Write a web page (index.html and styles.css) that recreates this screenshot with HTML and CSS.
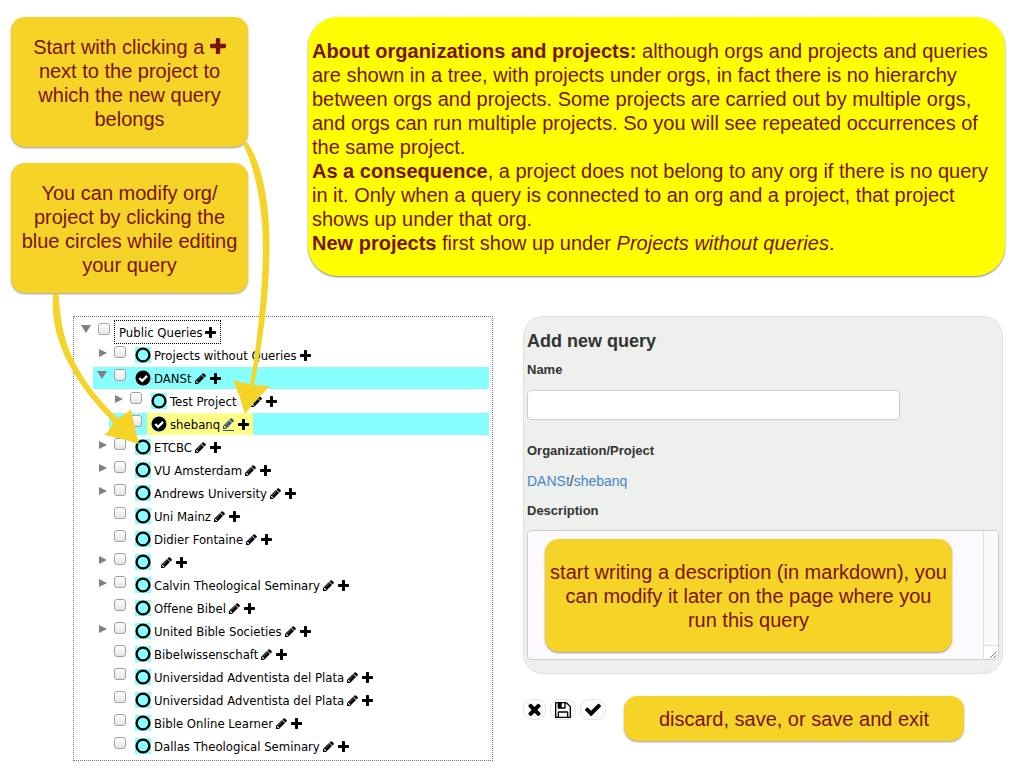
FILE: index.html
```
<!DOCTYPE html>
<html lang="en">
<head>
<meta charset="utf-8">
<title>Add new query</title>
<link rel="stylesheet" href="styles.css">
</head>
<body>
<svg class="symbols" aria-hidden="true">
  <symbol id="plus" viewBox="192 128 1408 1408"><path d="M1600 736v192q0 40-28 68t-68 28h-416v416q0 40-28 68t-68 28h-192q-40 0-68-28t-28-68v-416h-416q-40 0-68-28t-28-68v-192q0-40 28-68t68-28h416v-416q0-40 28-68t68-28h192q40 0 68 28t28 68v416h416q40 0 68 28t28 68z"/></symbol>
  <symbol id="pencil" viewBox="128 128 1536 1536"><path d="M491 1536l91-91-235-235-91 91v107h128v128h107zm523-928q0-22-22-22-10 0-17 7l-542 542q-7 7-7 17 0 22 22 22 10 0 17-7l542-542q7-7 7-17zm-54-192l416 416-832 832h-416v-416zm683 96q0 53-37 90l-166 166-416-416 166-165q36-38 90-38 53 0 91 38l235 234q37 39 37 91z"/></symbol>
  <symbol id="ring" viewBox="0 0 16 16"><circle cx="8" cy="8" r="6.4" fill="none" stroke="#000" stroke-width="2.4"/></symbol>
  <symbol id="ring-check" viewBox="0 0 16 16"><circle cx="8" cy="8" r="7.5"/><path d="M4.2 8l2.9 2.9 5-5" fill="none" stroke="#fff" stroke-width="2.2"/></symbol>
  <symbol id="times" viewBox="302 302 1188 1252"><path d="M1490 1322q0 40-28 68l-136 136q-28 28-68 28t-68-28l-294-294-294 294q-28 28-68 28t-68-28l-136-136q-28-28-28-68t28-68l294-294-294-294q-28-28-28-68t28-68l136-136q28-28 68-28t68 28l294 294 294-294q28-28 68-28t68 28l136 136q28 28 28 68t-28 68l-294 294 294 294q28 28 28 68z"/></symbol>
  <symbol id="floppy" viewBox="128 128 1536 1536"><path d="M512 1536h768v-384h-768v384zm896 0h128v-896q0-14-10-38.5t-20-34.5l-281-281q-10-10-34-20t-39-10v416q0 40-28 68t-68 28h-576q-40 0-68-28t-28-68v-416h-128v1280h128v-416q0-40 28-68t68-28h832q40 0 68 28t28 68v416zm-384-928v-320q0-13-9.5-22.5t-22.5-9.5h-192q-13 0-22.5 9.5t-9.5 22.5v320q0 13 9.5 22.5t22.5 9.5h192q13 0 22.5-9.5t9.5-22.5zm640 32v928q0 40-28 68t-68 28h-1344q-40 0-68-28t-28-68v-1344q0-40 28-68t68-28h928q40 0 88 20t76 48l280 280q28 28 48 76t20 88z"/></symbol>
  <symbol id="check" viewBox="121 270 1550 1252"><path d="M1671 566q0 40-28 68l-724 724-136 136q-28 28-68 28t-68-28l-136-136-362-362q-28-28-28-68t28-68l136-136q28-28 68-28t68 28l294 295 656-657q28-28 68-28t68 28l136 136q28 28 28 68z"/></symbol>
</svg>

<main class="page">
  <section class="intro">
    <div class="hints">
      <p class="note hint">Start with clicking a <svg class="note-plus" aria-label="plus"><use href="#plus"/></svg><br>next to the project to which the new query belongs</p>
      <p class="note hint">You can modify org/<br>project by clicking the blue circles while editing your query</p>
    </div>
    <div class="about">
      <p><b>About organizations and projects:</b> although orgs and projects and queries are shown in a tree, with projects under orgs, in fact there is no hierarchy between orgs and projects. Some projects are carried out by multiple orgs, and orgs can run multiple projects. So you will see repeated occurrences of the same project.</p>
      <p><b>As a consequence</b>, a project does not belong to any org if there is no query in it. Only when a query is connected to an org and a project, that project shows up under that org.</p>
      <p><b>New projects</b> first show up under <i>Projects without queries</i>.</p>
    </div>
  </section>

  <section class="work">
    <ul class="tree" id="tree"></ul>

    <form class="editor">
      <div class="panel">
        <h1 class="heading">Add new query</h1>
        <label class="label" for="name">Name</label>
        <input class="text" id="name" type="text">
        <div class="label">Organization/Project</div>
        <div class="path"><a href="#org">DANSt</a>/<a href="#project">shebanq</a></div>
        <label class="label" for="description">Description</label>
        <div class="area">
          <textarea class="description" id="description"></textarea>
          <div class="track"><svg class="grip" viewBox="0 0 14 14" aria-hidden="true"><path d="M6 13l7-7M10 13l3-3"/></svg></div>
          <p class="note area-note">start writing a description (in markdown), you can modify it later on the page where you<br>run this query</p>
        </div>
      </div>
      <div class="actions">
        <div class="buttons">
          <button class="tool" type="button" aria-label="Discard"><svg class="i-times"><use href="#times"/></svg></button>
          <button class="tool" type="button" aria-label="Save"><svg class="i-floppy"><use href="#floppy"/></svg></button>
          <button class="tool" type="button" aria-label="Save and exit"><svg class="i-check"><use href="#check"/></svg></button>
        </div>
        <p class="note action-note">discard, save, or save and exit</p>
      </div>
    </form>
  </section>

  <svg class="arrows" viewBox="0 0 300 460" aria-hidden="true">
    <path d="M243 144L247 142C262 163 270 202 269.500 250C269 300 262 345 254 385Q262 386 270 386Q256 400 245 414Q240 396 233 380Q242 383 250 384C257 345 262 300 263 250C263 210 256 170 243 144Z"/>
    <path d="M53 294H58.500C60 320 64 342 75 363C86 384 100 401 117 418Q126 415 131 409Q134 426 139 444Q121 438 104 435Q110 431 113 422C96 405 81 387 70 366C58 345 51 320 53 294Z"/>
  </svg>
</main>
<script src="tree.js"></script>
</body>
</html>
```

FILE: styles.css
```
* {
  box-sizing: border-box;
}

body {
  margin: 0;
  background: #fff;
  color: #333;
  font-family: "Liberation Sans", Arial, sans-serif;
}

p {
  margin: 0;
}

.symbols {
  position: absolute;
  width: 0;
  height: 0;
}

.page {
  position: relative;
  padding: 17px 19px 7px 11px;
}

.intro {
  display: grid;
  grid-template-columns: 237fr 697fr;
  align-items: start;
  gap: 60px;
}

.hints {
  display: flex;
  flex-direction: column;
  gap: 16px;
}

.note {
  display: block;
  border-radius: 14px;
  background: #f5d327;
  box-shadow: 0 1px 2px rgba(0, 0, 0, 0.4);
  color: #7a1204;
  font-size: 20px;
  line-height: 24px;
  text-align: center;
}

.hint {
  min-height: 130px;
  padding: 18px 8px 16px;
}

.note-plus {
  width: 16px;
  height: 16px;
  fill: currentColor;
}

.about {
  min-height: 259px;
  padding: 22px 4px 20px;
  border-radius: 30px;
  background: #ff0;
  box-shadow: 0 1px 2px rgba(0, 0, 0, 0.5);
  color: #7a1204;
  font-size: 20px;
  line-height: 24px;
}

.work {
  display: grid;
  grid-template-columns: 420fr 480fr;
  align-items: start;
  gap: 30px;
  margin: 23px 2px 0 62px;
}

.tree {
  margin: 0;
  padding: 4px 3px 2px;
  border: 1px dotted #777;
  list-style: none;
  color: #000;
  font-family: "DejaVu Sans Condensed", "DejaVu Sans", sans-serif;
  font-size: 13px;
}

.row {
  display: flex;
  align-items: flex-start;
  height: 22px;
  margin-bottom: 1px;
  padding-left: 4px;
}

.level-1 {
  margin-left: 16px;
}

.level-2 {
  margin-left: 32px;
}

.lit {
  background: #8ff;
}

.expander {
  width: 10px;
  height: 12px;
  margin: 2px 7px 0 0;
  padding: 0;
  border: 0;
  background: none;
}

.expander svg {
  display: block;
  width: 10px;
  height: 12px;
  fill: #808080;
}

.box {
  appearance: none;
  width: 12px;
  height: 12px;
  margin: 2px 5px 0 0;
  border: 1px solid #a0a0a0;
  border-radius: 3px;
  background: linear-gradient(#fff, #e6e6e6);
}

.title {
  display: flex;
  align-items: center;
  height: 22px;
  padding: 0 4px;
  white-space: nowrap;
}

.focused {
  outline: 1px dotted #000;
}

.picked {
  background: #ff8;
}

.name {
  margin-right: 3px;
}

.ring {
  width: 16px;
  height: 16px;
  margin-right: 3px;
  background: #8ff;
}

.picked .ring {
  background: none;
}

.pencil {
  width: 11px;
  height: 11px;
  margin-right: 4px;
}

.active {
  height: 13px;
  padding-bottom: 1px;
  border-bottom: 1px solid #357;
  fill: #357;
}

.plus {
  width: 11px;
  height: 11px;
}

.panel {
  padding: 14px 3px 13px;
  border: 1px solid #dce2dc;
  border-radius: 20px;
  background: #edf0ed;
}

.heading {
  margin: 0 0 9px;
  font-size: 18px;
  line-height: 20px;
}

.label {
  display: block;
  font-size: 13px;
  font-weight: bold;
  line-height: 20px;
}

.text {
  display: block;
  width: 79%;
  height: 30px;
  margin: 10px 0 21px;
  border: 1px solid #ccc;
  border-radius: 4px;
  background: #fff;
}

.path {
  margin: 10px 0;
  font-size: 14px;
  line-height: 20px;
}

.path a {
  color: #4884cc;
  text-decoration: none;
}

.area {
  position: relative;
  display: flex;
  height: 130px;
  margin-top: 9px;
  border: 1px solid #ccc;
  border-radius: 4px;
  background: #fdfaff;
  overflow: hidden;
}

.description {
  flex: 1;
  border: 0;
  background: none;
  resize: none;
}

.track {
  display: flex;
  flex-direction: column;
  justify-content: flex-end;
  width: 15px;
  border-left: 1px solid #ddd;
  background: #fafafa;
}

.grip {
  width: 14px;
  height: 14px;
  border-top: 1px solid #ddd;
  background: #fff;
  fill: none;
  stroke: #666;
}

.area-note {
  position: absolute;
  inset: 8px 46px 7px 17px;
  padding: 21px 2px;
}

.actions {
  display: flex;
  align-items: flex-start;
  gap: 18px;
  margin-top: 22px;
}

.buttons {
  display: flex;
  gap: 4px;
  padding-top: 3px;
}

.tool {
  display: flex;
  align-items: center;
  height: 21px;
  padding: 0 4px;
  border: 1px solid #dfeadf;
  border-radius: 9px;
  background: #fcfefc;
}

.i-times {
  width: 13px;
  height: 13px;
}

.i-floppy {
  width: 16px;
  height: 16px;
}

.i-check {
  width: 16px;
  height: 13px;
}

.action-note {
  flex: 1;
  margin-right: 39px;
  padding: 11px 10px 10px;
}

.arrows {
  position: absolute;
  top: 0;
  left: 0;
  width: 300px;
  height: 460px;
  fill: #f5d327;
  pointer-events: none;
}
```

FILE: tree.js
```
// [level, name, expander state, options]
const nodes = [
  [0, "Public Queries", "open", { root: true }],
  [1, "Projects without Queries", "shut", { fixed: true }],
  [1, "DANSt", "open", { chosen: true, lit: true }],
  [2, "Test Project\u00a0\u00a0\u00a0", "shut", {}],
  [2, "shebanq", "shut", { chosen: true, lit: true, picked: true }],
  [1, "ETCBC", "shut", {}],
  [1, "VU Amsterdam", "shut", {}],
  [1, "Andrews University", "shut", {}],
  [1, "Uni Mainz", "", {}],
  [1, "Didier Fontaine", "", {}],
  [1, "\u00a0", "shut", {}],
  [1, "Calvin Theological Seminary", "shut", {}],
  [1, "Offene Bibel", "", {}],
  [1, "United Bible Societies", "shut", {}],
  [1, "Bibelwissenschaft", "", {}],
  [1, "Universidad Adventista del Plata", "", {}],
  [1, "Universidad Adventista del Plata", "", {}],
  [1, "Bible Online Learner", "", {}],
  [1, "Dallas Theological Seminary", "", {}]
];

const icon = (cls, id) => `<svg class="${cls}" aria-hidden="true"><use href="#${id}"/></svg>`;
const triangles = {
  open: '<path d="M0 2h10L5 10z"/>',
  shut: '<path d="M2 3v8l8-4z"/>',
  "": ""
};

document.getElementById("tree").innerHTML = nodes.map(([level, name, state, o], i) => `
  <li class="row level-${level}${o.lit ? " lit" : ""}">
    <button class="expander" type="button" aria-label="Toggle ${name}"${state ? "" : " disabled"}><svg viewBox="0 0 10 12">${triangles[state]}</svg></button>
    <input class="box" type="checkbox" id="node-${i}">
    <div class="title${o.root ? " focused" : ""}${o.picked ? " picked" : ""}">
      ${o.root ? "" : icon("ring", o.chosen ? "ring-check" : "ring")}
      <label class="name" for="node-${i}">${name}</label>
      ${o.root || o.fixed ? "" : icon(`pencil${o.picked ? " active" : ""}`, "pencil")}
      ${icon("plus", "plus")}
    </div>
  </li>`).join("");
```
